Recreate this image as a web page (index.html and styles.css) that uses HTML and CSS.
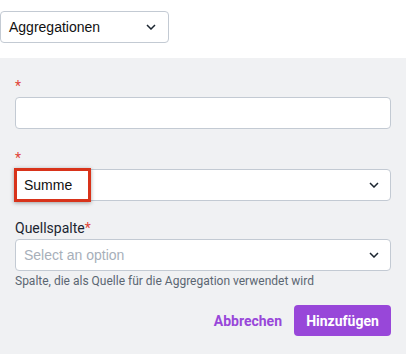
FILE: index.html
```html
<!DOCTYPE html>
<html>
<head>
    <title>Aggregation</title>
    <link rel="stylesheet" href="styles.css">
</head>
<body>
    <div class="toolbar">
        <div class="select top-select">
            <span>Aggregationen</span>
            <svg class="chev" viewBox="0 0 10 6"><path d="M1 1l4 4 4-4" /></svg>
        </div>
    </div>
    <div class="panel">
        <div class="field field-name">
            <label class="label"><span class="req">*</span></label>
            <div class="input"></div>
        </div>
        <div class="field field-type">
            <label class="label"><span class="req">*</span></label>
            <div class="select-wrap">
                <div class="select">
                    <span class="value">Summe</span>
                    <svg class="chev" viewBox="0 0 10 6"><path d="M1 1l4 4 4-4" /></svg>
                </div>
                <div class="highlight"></div>
            </div>
        </div>
        <div class="field">
            <label class="label">Quellspalte<span class="req">*</span></label>
            <div class="select">
                <span class="placeholder">Select an option</span>
                <svg class="chev" viewBox="0 0 10 6"><path d="M1 1l4 4 4-4" /></svg>
            </div>
            <div class="hint">Spalte, die als Quelle für die Aggregation verwendet wird</div>
        </div>
        <div class="actions">
            <button class="btn-link">Abbrechen</button>
            <button class="btn-primary">Hinzufügen</button>
        </div>
    </div>
</body>
</html>
```

FILE: styles.css
```css
body {
    margin: 0;
    font-family: Roboto, "Liberation Sans", sans-serif;
    color: #1f2933;
    background: #fff;
}
.toolbar {
    height: 58px;
    padding-top: 11px;
    box-sizing: border-box;
}
.select {
    display: flex;
    align-items: center;
    justify-content: space-between;
    height: 32px;
    box-sizing: border-box;
    border: 1px solid #c3cad3;
    border-radius: 4px;
    background: #fff;
    padding: 0 11px 0 8px;
    font-family: "Liberation Sans", Arial, sans-serif;
    font-size: 14px;
}
.top-select {
    width: 169px;
    padding-left: 8px;
    padding-right: 12px;
    color: #111;
}
.chev {
    width: 10px;
    height: 6px;
    fill: none;
    stroke: #1b2530;
    stroke-width: 1.5;
}
.panel {
    background: #f0f1f3;
    width: 406px;
    height: 296px;
    padding: 18px 15px 0 15px;
    box-sizing: border-box;
}
.field {
    margin-bottom: 10px;
}
.field-name {
    margin-bottom: 19px;
}
.field-type {
    margin-bottom: 17px;
}
.label {
    display: block;
    height: 20px;
    line-height: 20px;
    font-size: 14px;
    color: #1b2530;
    margin-bottom: 1px;
}
.req {
    color: #e0463a;
    margin-left: 3px;
}
.label .req:first-child {
    margin-left: 0;
}
.input {
    height: 32px;
    box-sizing: border-box;
    border: 1px solid #c3cad3;
    border-radius: 4px;
    background: #fff;
}
.select-wrap {
    position: relative;
}
.value {
    color: #111;
}
.highlight {
    position: absolute;
    left: -1px;
    top: -1px;
    width: 77px;
    height: 34px;
    box-sizing: border-box;
    border: 3px solid #d8331a;
    box-shadow: 0 1px 4px rgba(0, 0, 0, 0.35);
}
.placeholder {
    color: #a7afba;
}
.hint {
    font-size: 12px;
    color: #5b6672;
    margin-top: 3px;
}
.actions {
    display: flex;
    justify-content: flex-end;
    align-items: center;
    gap: 12px;
    margin-top: 17px;
}
.btn-link {
    background: none;
    border: 0;
    font-family: Roboto, sans-serif;
    font-weight: 700;
    font-size: 14px;
    color: #9847d9;
    padding: 0;
}
.btn-primary {
    background: #9847d9;
    color: #fff;
    border: 0;
    border-radius: 4px;
    height: 31px;
    width: 97px;
    font-family: Roboto, sans-serif;
    font-weight: 700;
    font-size: 14px;
}
```
